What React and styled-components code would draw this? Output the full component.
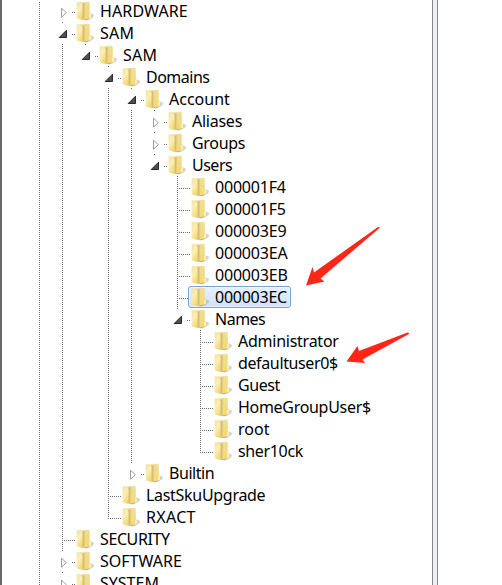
import React from 'react';
import styled, { createGlobalStyle } from 'styled-components';

const GlobalStyle = createGlobalStyle`
  * { box-sizing: border-box; }
  body { margin: 0; background: #fff; overflow: hidden; }
`;

const Window = styled.main`
  position: relative;
  display: flex;
  width: 502px;
  height: 585px;
  overflow: hidden;
  background: #fff;
`;

const TreePane = styled.section`
  width: 433px;
  padding-top: 1px;
  border-left: 2px solid #68686e;
  border-right: 1px solid #828790;
  overflow: hidden;
`;

const Splitter = styled.div`
  width: 5px;
  background: #f0f0f0;
  border-right: 1px solid #828790;
`;

const ValuePane = styled.section`
  flex: 1;
  background: #fff;
`;

const Row = styled.div`
  display: flex;
  align-items: flex-start;
  height: 22px;
  padding-left: 26px;
`;

const Cell = styled.svg`
  flex: none;
  display: block;
  width: 23px;
  height: 22px;
  overflow: visible;
`;

const Item = styled.div`
  display: flex;
  align-items: center;
  height: 22px;
  margin: -1px 0 0 -1px;
  padding: 0 3px 0 1px;
  border: 1px solid ${p => (p.$selected ? '#7da2ce' : 'transparent')};
  border-radius: 3px;
  background: ${p => (p.$selected ? 'linear-gradient(#e6f0fd, #cfe3fd)' : 'none')};
  box-shadow: ${p => (p.$selected ? 'inset 0 0 0 1px rgba(255,255,255,.45)' : 'none')};
`;

const FolderSvg = styled.svg`
  flex: none;
  width: 20px;
  height: 20px;
`;

const Label = styled.span`
  margin-left: 5px;
  font: 16px/20px 'Noto Sans', 'Open Sans', sans-serif;
  letter-spacing: ${p => p.$spacing}px;
  color: #000;
  white-space: pre;
`;

const Arrows = styled.svg`
  position: absolute;
  left: 0;
  top: 0;
  pointer-events: none;
`;

function Folder() {
  return (
    <FolderSvg viewBox="0 0 20 20">
      <path d="M8 19L15 12.6Q19 13 19.3 14.5Q18.4 17.4 12 19.2Z" fill="url(#shade)" />
      <path d="M2.4 1.4L13.6 .7Q14.8 .7 14.8 1.9V12.5L16 13.6V16.9L9 18.4L2.4 17Z" fill="url(#back)" />
      <path d="M7 3L10.6 1.6V17.9L7 18.8Z" fill="url(#inside)" />
      <path d="M1.6 1.9Q1.6 1 2.5 1.3L6.8 3.1Q7.7 3.5 7.7 4.4V19.2L2.4 17.4Q1.6 17.1 1.6 16.4Z" fill="url(#front)" />
      <path d="M14 13Q16.2 12 16.2 14V16.8L14 17.4Z" fill="#ffedaa" />
    </FolderSvg>
  );
}

function Defs() {
  return (
    <defs>
      <linearGradient id="front" x2=".5" y2="1">
        <stop stopColor="#f3e29a" /><stop offset=".5" stopColor="#fbefb8" /><stop offset="1" stopColor="#f2d874" />
      </linearGradient>
      <linearGradient id="back" x2=".3" y2="1">
        <stop stopColor="#f3e2a0" /><stop offset=".5" stopColor="#f0dc8e" /><stop offset="1" stopColor="#f6da70" />
      </linearGradient>
      <linearGradient id="inside" x2="1">
        <stop stopColor="#c6aa58" /><stop offset="1" stopColor="#efdb90" />
      </linearGradient>
      <linearGradient id="shade" x2="1">
        <stop stopColor="#858585" stopOpacity=".8" /><stop offset="1" stopColor="#909090" stopOpacity=".3" />
      </linearGradient>
    </defs>
  );
}

const dotted = { stroke: '#6c6c6c', strokeWidth: 1, strokeDasharray: '1 1' };

function Guide({ visible }) {
  return <Cell>{visible && <path d="M11.5 1V22" {...dotted} />}</Cell>;
}

function Branch({ kind, last }) {
  if (kind === 'leaf') {
    return (
      <Cell>
        <path d={last ? 'M11.5 1V12' : 'M11.5 1V22'} {...dotted} />
        <path d="M13 11.5H25" {...dotted} />
      </Cell>
    );
  }
  return (
    <Cell>
      {kind === 'open'
        ? <path d="M15.5 7.2V14.5H8.2Z" fill="#505050" stroke="#292929" />
        : <path d="M10.5 7.2L15.3 11.7L10.5 16.2Z" fill="#fff" stroke="#9c9c9c" />}
      {!last && <path d="M11.5 21V22" {...dotted} />}
      <path d="M21 11.5H25" {...dotted} />
      {kind === 'open' && <path d="M34.5 21V22" {...dotted} />}
    </Cell>
  );
}

// [label, ancestor columns ("|" where the line carries on), kind, last sibling, letter spacing, selected]
const rows = [
  ['HARDWARE', '|', 'closed', false, 0.12],
  ['SAM', '|', 'open', false, 0.2],
  ['SAM', '||', 'open', true, 0.2],
  ['Domains', '|| ', 'open', false, -0.5],
  ['Account', '|| |', 'open', false, 0],
  ['Aliases', '|| ||', 'closed', false, -0.25],
  ['Groups', '|| ||', 'closed', false, -0.3],
  ['Users', '|| ||', 'open', true, -0.5],
  ['000001F4', '|| || ', 'leaf', false, -0.2],
  ['000001F5', '|| || ', 'leaf', false, -0.2],
  ['000003E9', '|| || ', 'leaf', false, -0.2],
  ['000003EA', '|| || ', 'leaf', false, -0.2],
  ['000003EB', '|| || ', 'leaf', false, -0.2],
  ['000003EC', '|| || ', 'leaf', false, -0.25, true],
  ['Names', '|| || ', 'open', true, -0.5],
  ['Administrator', '|| ||  ', 'leaf', false, -0.25],
  ['defaultuser0$', '|| ||  ', 'leaf', false, -0.37],
  ['Guest', '|| ||  ', 'leaf', false, -0.4],
  ['HomeGroupUser$', '|| ||  ', 'leaf', false, -0.3],
  ['root', '|| ||  ', 'leaf', false, 0],
  ['sher10ck', '|| ||  ', 'leaf', true, -0.35],
  ['Builtin', '|| |', 'closed', true, -0.45],
  ['LastSkuUpgrade', '|| ', 'leaf', false, -0.3],
  ['RXACT', '|| ', 'leaf', true, 0.3],
  ['SECURITY', '|', 'leaf', false, -0.4],
  ['SOFTWARE', '|', 'closed', false, 0],
  ['SYSTEM', '|', 'closed', false, 0],
];

export default function App() {
  return (
    <Window>
      <GlobalStyle />
      <TreePane>
        {rows.map(([name, guides, kind, last, spacing, selected], i) => (
          <Row key={i}>
            {[...guides].map((c, j) => <Guide key={j} visible={c === '|'} />)}
            <Branch kind={kind} last={last} />
            <Item $selected={selected}><Folder /><Label $spacing={spacing}>{name}</Label></Item>
          </Row>
        ))}
      </TreePane>
      <Splitter />
      <ValuePane />
      <Arrows width="502" height="585">
        <Defs />
        <path d="M306 285.5L312.5 267L314 272.5L378 227Q380.5 226.5 379 228.5L320.5 278.5L324.5 281.5Z" fill="#ff2618" />
        <path d="M346.5 361.5L357.5 346L359 351L407.5 332.5Q410 333 408.5 334.2L362.5 359.5L365 363Z" fill="#ff2618" />
      </Arrows>
    </Window>
  );
}
